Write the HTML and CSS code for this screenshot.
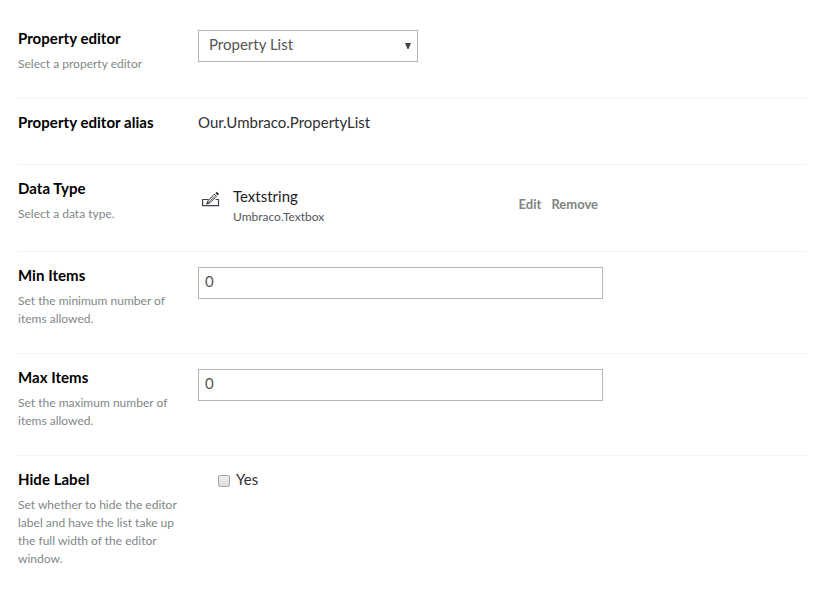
FILE: index.html
```html
<!DOCTYPE html>
<html lang="en">
<head>
<meta charset="utf-8">
<title>Property editor</title>
<link rel="stylesheet" href="styles.css">
</head>
<body>
<main class="form">
  <section class="row row-editor">
    <div class="label"><h2>Property editor</h2><p>Select a property editor</p></div>
    <div class="control"><div class="select"><span>Property List</span><svg class="arrow" width="6" height="6" viewBox="0 0 6 6"><path d="M0 0h6L3.5 6h-1z" fill="#444"/></svg></div></div>
  </section>
  <section class="row row-alias">
    <div class="label"><h2>Property editor alias</h2></div>
    <div class="control"><span class="value">Our.Umbraco.PropertyList</span></div>
  </section>
  <section class="row row-type">
    <div class="label"><h2>Data Type</h2><p>Select a data type.</p></div>
    <div class="control datatype">
      <svg class="icon" width="18" height="18" viewBox="0 0 18 18"><path d="M6.5 8.500H.6v6.100h15.900V8.500H13.500" fill="none" stroke="#41414f" stroke-width="1.200"/><path d="M4.800 13l1.600-3.800 5.900-6 2.100 2.100-6 6z" fill="#fff" stroke="#303033"/><path d="M7.200 10.700l5.300-5.400" stroke="#303033" stroke-width=".8"/><path d="M4.300 13.400l1.200-3 1.900 1.800z" fill="#303033"/><path d="M13.400 2.200l1.400-1.400 2.200 2.200-1.400 1.400z" fill="#303033"/></svg>
      <div class="node"><span class="name">Textstring</span><span class="alias">Umbraco.Textbox</span></div>
      <div class="actions"><a>Edit</a><a>Remove</a></div>
    </div>
  </section>
  <section class="row row-num">
    <div class="label"><h2>Min Items</h2><p>Set the minimum number of items allowed.</p></div>
    <div class="control"><div class="input">0</div></div>
  </section>
  <section class="row row-num">
    <div class="label"><h2>Max Items</h2><p>Set the maximum number of items allowed.</p></div>
    <div class="control"><div class="input">0</div></div>
  </section>
  <section class="row row-hide">
    <div class="label"><h2>Hide Label</h2><p>Set whether to hide the editor label and have the list take up the full width of the editor window.</p></div>
    <div class="control check"><span class="box"></span><span>Yes</span></div>
  </section>
</main>
</body>
</html>
```
FILE: styles.css
```css
* { box-sizing: border-box; }
body { margin: 0; background: #fff; font: 15px/20px Lato, sans-serif; color: #303033; }
.form { width: 788px; margin-left: 18px; padding-top: 13px; }
.row { display: flex; border-bottom: 1px solid #f3f3f5; padding-top: 13px; }
.row-editor { height: 86px; padding-top: 15px; }
.row-alias { height: 66px; }
.row-type { height: 87px; }
.row-num { height: 102px; }
.row-hide { border-bottom: 0; }
.label { width: 160px; margin-right: 20px; flex: none; }
h2 { margin: 0; font-size: 15px; line-height: 20px; font-weight: 700; letter-spacing: .04px; color: #000; }
p { margin: 7px 0 0; font-size: 12px; line-height: 18px; letter-spacing: .01px; color: #818786; }
.select { display: flex; align-items: center; justify-content: space-between; width: 220px; height: 32px; margin-top: 2px; border: 1px solid #b5b5b9; padding: 0 6px 4px 10px; color: #555; }
.arrow { margin-top: 4px; }
.input { width: 405px; height: 32px; margin-top: 2px; border: 1px solid #b5b5b9; padding: 3px 6px; color: #555; }
.datatype { display: flex; width: 405px; }
.icon { margin: 13px 0 0 4px; }
.node { margin: 8px 0 0 13px; display: flex; flex-direction: column; }
.name { color: #1c1c1f; }
.alias { margin-top: 1px; font-size: 12px; line-height: 18px; padding-top: 1px; color: #55555b; }
.actions { display: flex; gap: 10px; margin: 16px 5px 0 auto; font-size: 13px; font-weight: 700; color: #7e8582; }
.check { display: flex; padding-left: 20px; gap: 6px; }
.box { width: 12px; height: 12px; margin-top: 6px; border: 1px solid #a9a9a9; border-radius: 2px; background: linear-gradient(#eee, #ddd); }
```
